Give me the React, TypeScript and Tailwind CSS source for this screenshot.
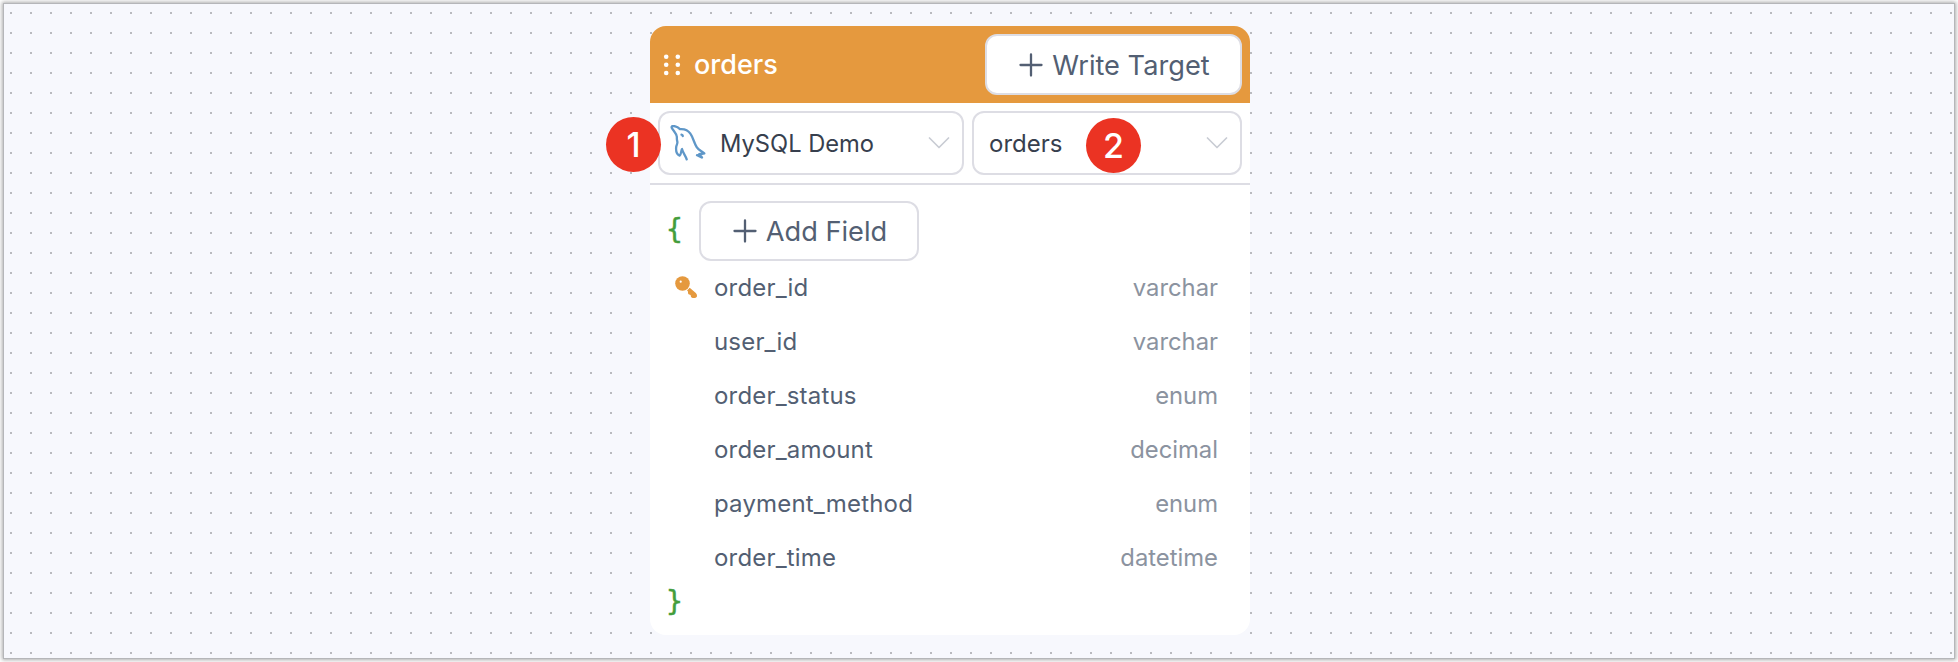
type Field = { name: string; type: string; primary?: boolean };

const fields: Field[] = [
  { name: "order_id", type: "varchar", primary: true },
  { name: "user_id", type: "varchar" },
  { name: "order_status", type: "enum" },
  { name: "order_amount", type: "decimal" },
  { name: "payment_method", type: "enum" },
  { name: "order_time", type: "datetime" },
];

function PlusIcon() {
  return (
    <svg className="h-6 w-6 shrink-0" viewBox="0 0 24 24" fill="none" stroke="currentColor" strokeWidth="2.3" strokeLinecap="round">
      <path d="M12 1.500v21M1.500 12h21" />
    </svg>
  );
}

function ChevronIcon() {
  return (
    <svg className="h-3 w-[22px] shrink-0" viewBox="0 0 22 12" fill="none" stroke="#c9ccd4" strokeWidth="1.7" strokeLinecap="round" strokeLinejoin="round">
      <path d="M1.500 1 11 10.500 20.500 1" />
    </svg>
  );
}

function GripIcon() {
  return (
    <svg className="h-[22px] w-[18px] shrink-0" viewBox="0 0 18 22" fill="#fff">
      {[2.7, 10.8, 19].map((cy) => (
        <g key={cy}>
          <circle cx="3.2" cy={cy} r="2.3" />
          <circle cx="14.8" cy={cy} r="2.3" />
        </g>
      ))}
    </svg>
  );
}

function DolphinIcon() {
  return (
    <svg className="h-9 w-9 shrink-0" viewBox="0 0 36 36" fill="none" stroke="#5f97c8" strokeWidth="2.300" strokeLinecap="round" strokeLinejoin="round">
      <path d="M16.700 34.300C15.700 31 13.200 28.500 12 24c-1.100 2-.6 5.200-2.400 6.600C6.800 29.500 5.800 25.500 6.200 22c.2-1.800 1.400-3.200 1.200-5C7.100 15.300 6.700 15 6.900 12 6.700 8.500 3.200 5.800 1.700 2.700 1.200 1 3.400.9 5.200 1.300c1.900.4 3.500 1.600 4.800 2.800 4.600-.4 8.200 1.300 10.400 4.600 2.800 4 3.600 9 6.300 13.500 1.700 2.900 5.100 4 7.600 6.200-1.800.5-3.600.2-5.300.9.8 1.200 2.200 1.800 3 3.200-2-.2-3.200-1.600-5-2.400" />
      <path d="M11.500 9.700c.8.100 1.200.6 1.300 1.300" />
    </svg>
  );
}

function KeyIcon() {
  return (
    <svg className="mb-0.5 h-[22px] w-[22px] shrink-0" viewBox="0 0 22 22" fill="#e5993e">
      <circle cx="7.500" cy="7.500" r="7.300" />
      <path d="M14.700 11.700l6.100 5.300c.8.800 1.200 1.700 1.200 2.800 0 1.400-.8 2.100-2.300 2.100h-1.900c-1.200 0-1.900-.6-2-1.800l-.2-1.200-1.400-.4c-.9-.3-1.200-.9-1.200-1.800v-1.200l-1-.9z" />
      <circle cx="5.700" cy="5.700" r="1.100" fill="#fff" />
    </svg>
  );
}

function Marker({ label, place }: { label: string; place: string }) {
  return (
    <span className={`absolute flex h-[55px] w-[55px] items-center justify-center rounded-full bg-[#eb3323] text-[34px] leading-none font-medium text-white ${place}`}>
      {label}
    </span>
  );
}

export default function App() {
  return (
    <div className="h-[662px] w-[1958px] overflow-hidden bg-white p-1 font-['Inter','Liberation_Sans',sans-serif]">
      <main className="flex h-[654px] bg-[#f7f8fd] bg-[conic-gradient(from_0deg_at_2px_2px,transparent_75%,#b9babf_0)] bg-[length:20px_20px] bg-[position:6px_8px] pt-[22px] pl-[646px] shadow-[0_0_0_1px_#b5b6b9,0_0_4px_2px_#00000055]">
        <section className="relative flex h-[609px] w-[600px] flex-col rounded-2xl bg-white">
          <header className="flex h-[77px] shrink-0 items-center rounded-t-2xl bg-[#e5993e] pr-2 pl-[13px]">
            <GripIcon />
            <h1 className="ml-[13px] flex-1 text-[27px] leading-none font-medium text-white">orders</h1>
            <button className="flex h-[61px] w-[257px] items-center justify-center gap-[9px] rounded-xl border-2 border-[#dddde4] bg-white pl-0.5 text-[27.200px] leading-none text-[#535f73]">
              <PlusIcon />
              <span className="pt-0.5">Write Target</span>
            </button>
          </header>
          <div className="flex h-[82px] shrink-0 gap-2 border-b-2 border-[#dddde4] p-2">
            <button className="flex h-16 w-[306px] items-center rounded-xl border-2 border-[#dddde4] pr-3 pl-[10px] text-left text-[23.700px] leading-none text-[#373f4e]">
              <DolphinIcon />
              <span className="ml-[14px] flex-1 pt-0.5">MySQL Demo</span>
              <ChevronIcon />
            </button>
            <button className="flex h-16 w-[270px] items-center rounded-xl border-2 border-[#dddde4] pr-3 pl-[15px] text-left text-[24px] leading-none text-[#373f4e]">
              <span className="flex-1 pt-0.5">orders</span>
              <ChevronIcon />
            </button>
          </div>
          <div className="flex flex-col pt-4">
            <div className="flex h-[60px] items-center">
              <span className="w-[49px] pb-0.5 pl-4 font-['DejaVu_Sans_Mono',monospace] text-[28px] leading-none text-[#449d3c] [-webkit-text-stroke:0.4px_#449d3c]">{"{"}</span>
              <button className="flex h-[60px] w-[220px] items-center justify-center gap-[9px] rounded-xl border-2 border-[#dddde4] pl-0.5 text-[27.200px] leading-none text-[#535f73]">
                <PlusIcon />
                <span className="pt-0.5">Add Field</span>
              </button>
            </div>
            <ul>
              {fields.map((field) => (
                <li key={field.name} className="flex h-[54px] items-center pr-8 pl-[25px] text-[24px] leading-none text-[#535f73]">
                  <span className="w-[39px]">{field.primary && <KeyIcon />}</span>
                  <span className="flex-1 tracking-[0.18px]">{field.name}</span>
                  <span className="text-[23.800px] text-[#8b93a0]">{field.type}</span>
                </li>
              ))}
            </ul>
            <span className="pt-[3px] pl-4 font-['DejaVu_Sans_Mono',monospace] text-[28px] leading-none text-[#449d3c] [-webkit-text-stroke:0.4px_#449d3c]">{"}"}</span>
          </div>
          <Marker label="1" place="top-[91px] left-[-44px]" />
          <Marker label="2" place="top-[92px] left-[436px]" />
        </section>
      </main>
    </div>
  );
}
